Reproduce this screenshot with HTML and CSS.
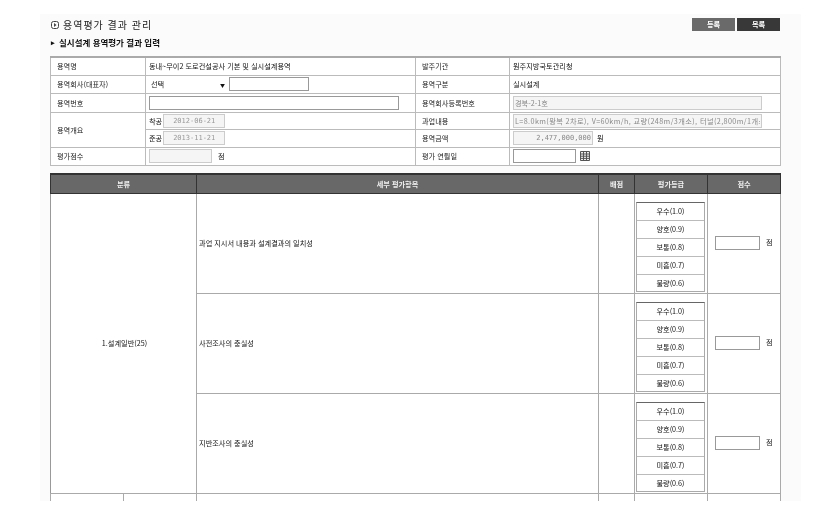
FILE: index.html
```html
<!DOCTYPE html>
<html lang="ko">
<head>
  <meta charset="UTF-8">
  <link rel="stylesheet" href="styles.css">
  <title>용역평가 결과 관리</title>
</head>
<body>
  <div class="page">
    <div class="topbar">
      <h1 class="title">
        <svg class="title-icon" width="8" height="8" viewBox="0 0 8 8"><rect x="0.5" y="0.5" width="7" height="7" rx="2" fill="none" stroke="#444"/><path d="M3 2 L5.5 4 L3 6 Z" fill="#444"/></svg>
        용역평가 결과 관리
      </h1>
      <div class="buttons">
        <a class="btn">등록</a>
        <a class="btn btn-dark">목록</a>
      </div>
    </div>
    <h2 class="subtitle"><span class="bullet">▸</span>실시설계 용역평가 결과 입력</h2>

    <table class="info">
      <colgroup><col class="c1"><col class="c2"><col class="c3"><col class="c4"></colgroup>
      <tr class="h18">
        <th>용역명</th>
        <td>동내~무이2 도로건설공사 기본 및 실시설계용역</td>
        <th>발주기관</th>
        <td>원주지방국토관리청</td>
      </tr>
      <tr class="h18">
        <th>용역회사(대표자)</th>
        <td>
          <div class="line">
            <span class="fake-select">선택<span class="arrow">▼</span></span>
            <input class="inp w80" type="text">
          </div>
        </td>
        <th>용역구분</th>
        <td>실시설계</td>
      </tr>
      <tr class="h19">
        <th>용역번호</th>
        <td><input class="inp w250" type="text"></td>
        <th>용역회사등록번호</th>
        <td><input class="inp inp-off w249" type="text" value="경북-2-1호"></td>
      </tr>
      <tr class="h17">
        <th rowspan="2">용역개요</th>
        <td><div class="line line-tight">착공 <input class="inp inp-off date" type="text" value="2012-06-21"></div></td>
        <th>과업내용</th>
        <td><input class="inp inp-off w249 wide" type="text" value="L=8.0km(왕복 2차로), V=60km/h, 교량(248m/3개소), 터널(2,800m/1개소"></td>
      </tr>
      <tr class="h18">
        <td><div class="line line-tight">준공 <input class="inp inp-off date" type="text" value="2013-11-21"></div></td>
        <th>용역금액</th>
        <td><div class="line"><input class="inp inp-off money" type="text" value="2,477,000,000"> 원</div></td>
      </tr>
      <tr class="h18">
        <th>평가점수</th>
        <td><div class="line"><input class="inp inp-off w63" type="text"> <span class="unit">점</span></div></td>
        <th>평가 연월일</th>
        <td>
          <div class="line">
            <input class="inp w63" type="text">
            <svg class="cal" width="10" height="10" viewBox="0 0 10 10"><path d="M0.5 0.5H9.5V9.5H0.5Z M0.5 3H9.5 M0.5 5.2H9.5 M0.5 7.4H9.5 M3.5 0.5V9.5 M6.5 0.5V9.5" fill="#eee" stroke="#555"/></svg>
          </div>
        </td>
      </tr>
    </table>

    <div class="eval-wrap">
      <table class="eval">
        <colgroup><col class="e0"><col class="e1"><col class="e2"><col class="e3"><col class="e4"><col class="e5"></colgroup>
        <thead>
          <tr>
            <th colspan="2">분류</th>
            <th>세부 평가항목</th>
            <th>배점</th>
            <th>평가등급</th>
            <th>점수</th>
          </tr>
        </thead>
        <tbody>
          <tr>
            <td colspan="2" rowspan="3" class="center">1.설계일반(25)</td>
            <td>과업 지시서 내용과 설계결과의 일치성</td>
            <td></td>
            <td class="grade-cell">
              <ul class="grades">
                <li>우수(1.0)</li><li>양호(0.9)</li><li>보통(0.8)</li><li>미흡(0.7)</li><li>불량(0.6)</li>
              </ul>
            </td>
            <td class="score"><input class="inp score-inp" type="text"><span class="unit">점</span></td>
          </tr>
          <tr>
            <td>사전조사의 충실성</td>
            <td></td>
            <td class="grade-cell">
              <ul class="grades">
                <li>우수(1.0)</li><li>양호(0.9)</li><li>보통(0.8)</li><li>미흡(0.7)</li><li>불량(0.6)</li>
              </ul>
            </td>
            <td class="score"><input class="inp score-inp" type="text"><span class="unit">점</span></td>
          </tr>
          <tr>
            <td>지반조사의 충실성</td>
            <td></td>
            <td class="grade-cell">
              <ul class="grades">
                <li>우수(1.0)</li><li>양호(0.9)</li><li>보통(0.8)</li><li>미흡(0.7)</li><li>불량(0.6)</li>
              </ul>
            </td>
            <td class="score"><input class="inp score-inp" type="text"><span class="unit">점</span></td>
          </tr>
          <tr class="cut">
            <td></td><td></td><td></td><td></td><td></td><td></td>
          </tr>
        </tbody>
      </table>
    </div>
  </div>
</body>
</html>
```

FILE: styles.css
```css
html, body {
  margin: 0;
  background: #fff;
  font-family: "Noto Sans CJK KR", "Liberation Sans", sans-serif;
  font-size: 7.2px;
  color: #111;
}
/* the reference is a soft, scanned-looking capture */
.page {
  width: 751px;
  height: 487px;
  margin: 14px 0 0 40px;
  padding: 0 0 0 10px;
  background: #fbfbfb;
  overflow: hidden;
  filter: blur(0.35px);
}
.topbar {
  display: flex;
  justify-content: space-between;
  width: 730px;
  height: 16px;
  padding-top: 4px;
}
.title {
  display: flex;
  align-items: center;
  gap: 4px;
  margin: 0 0 0 1px;
  height: 13px;
  font-size: 10px;
  font-weight: normal;
  letter-spacing: 1px;
  color: #222;
}
.buttons {
  display: flex;
  gap: 2px;
}
.btn {
  width: 43px;
  height: 13px;
  line-height: 13px;
  text-align: center;
  background: #6a6a6a;
  color: #fff;
  font-weight: bold;
}
.btn-dark {
  background: #383838;
}
.subtitle {
  display: flex;
  align-items: center;
  height: 16px;
  margin: 0 0 6px 1px;
  font-size: 8.5px;
  font-weight: bold;
  color: #111;
}
.bullet {
  width: 8px;
  font-size: 7px;
}
table {
  border-collapse: collapse;
  table-layout: fixed;
  width: 730px;
}
.info {
  background: #fff;
  border-top: 2px solid #aaa;
}
.info th, .info td {
  border: 1px solid #bbb;
  padding: 0 0 0 3px;
  font-weight: normal;
  text-align: left;
  white-space: nowrap;
  overflow: hidden;
}
.info th {
  padding-left: 6px;
  color: #222;
}
.c1 { width: 95px; }
.c2 { width: 270px; }
.c3 { width: 94px; }
.c4 { width: 271px; }
.h17 { height: 17px; }
.h18 { height: 18px; }
.h19 { height: 19px; }
.line {
  display: flex;
  align-items: center;
  gap: 4px;
}
.line-tight {
  gap: 1px;
}
.inp {
  box-sizing: border-box;
  height: 14px;
  padding: 0 1px;
  border: 1px solid #999;
  background: #fff;
  font-family: inherit;
  font-size: 7.2px;
  color: #888;
  vertical-align: middle;
}
.inp-off {
  border-color: #ccc;
  background: #f5f5f5;
}
.w63 { width: 63px; }
.w80 { width: 80px; }
.w249 { width: 249px; }
.w250 { width: 250px; }
.wide {
  letter-spacing: 0.4px;
}
.date {
  width: 62px;
  text-align: center;
  font-family: "DejaVu Sans Mono", monospace;
  font-size: 7px;
  color: #999;
}
.money {
  width: 80px;
  text-align: right;
  font-family: "DejaVu Sans Mono", monospace;
  font-size: 7px;
}
.fake-select {
  display: flex;
  justify-content: space-between;
  align-items: center;
  width: 74px;
  padding-left: 2px;
}
.arrow {
  font-size: 5px;
}
.unit {
  margin-left: 2px;
}
.eval-wrap {
  margin-top: 7px;
  height: 328px;
  overflow: hidden;
}
.eval {
  background: #fff;
}
.e0 { width: 73px; }
.e1 { width: 73px; }
.e2 { width: 402px; }
.e3 { width: 36px; }
.e4 { width: 73px; }
.e5 { width: 73px; }
.eval th {
  height: 18px;
  padding: 0;
  background: #686868;
  border: 1px solid #333;
  border-top-width: 2px;
  color: #eee;
  font-size: 7.2px;
  font-weight: bold;
}
.eval td {
  height: 99px;
  padding: 0 0 0 2px;
  border: 1px solid #aaa;
  color: #111;
}
.eval td.center {
  text-align: center;
  border-left-color: #999;
}
.eval .grade-cell {
  padding: 0;
  vertical-align: bottom;
}
.eval .cut td {
  height: 20px;
}
.grades {
  box-sizing: border-box;
  width: 69px;
  margin: 0 0 1px 1px;
  padding: 0;
  list-style: none;
  border: 1px solid #aaa;
  border-top-color: #666;
  background: #fff;
}
.grades li {
  height: 18px;
  line-height: 17px;
  text-align: center;
  border-bottom: 1px solid #bbb;
  box-sizing: border-box;
}
.grades li:last-child {
  border-bottom: none;
  height: 16px;
}
.eval .score {
  padding-left: 7px;
  white-space: nowrap;
}
.score-inp {
  width: 45px;
}
.score .unit {
  margin-left: 6px;
}
```
